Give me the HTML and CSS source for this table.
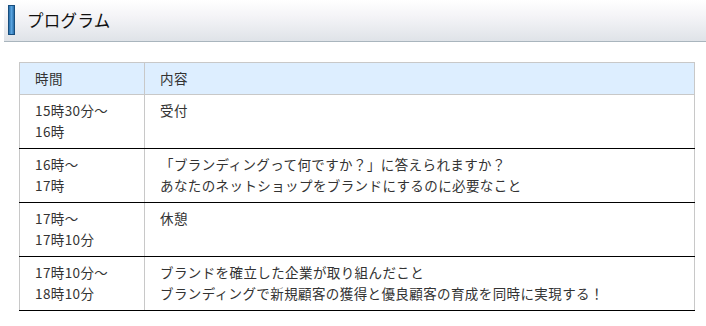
FILE: index.html
```html
<!DOCTYPE html>
<html lang="ja">
<head>
  <meta charset="UTF-8">
  <title>プログラム</title>
  <link rel="stylesheet" href="styles.css">
</head>
<body>

<section class="program">
  <h2 class="section-title">プログラム</h2>
  <table class="schedule">
    <thead>
      <tr>
        <th class="col-time">時間</th>
        <th>内容</th>
      </tr>
    </thead>
    <tbody>
      <tr>
        <td>15時30分～<br>16時</td>
        <td>受付</td>
      </tr>
      <tr>
        <td>16時～<br>17時</td>
        <td>「ブランディングって何ですか？」に答えられますか？<br>あなたのネットショップをブランドにするのに必要なこと</td>
      </tr>
      <tr>
        <td>17時～<br>17時10分</td>
        <td>休憩</td>
      </tr>
      <tr>
        <td>17時10分～<br>18時10分</td>
        <td>ブランドを確立した企業が取り組んだこと<br>ブランディングで新規顧客の獲得と優良顧客の育成を同時に実現する！</td>
      </tr>
    </tbody>
  </table>
</section>

</body>
</html>
```

FILE: styles.css
```css
:root {
  --text: #333;
  --line: #c8c8c8;
  --head-bg: #ddeeff;
}

* {
  box-sizing: border-box;
}

body {
  margin: 0;
  background: #fff;
  color: var(--text);
  font-family: "Noto Sans CJK JP", "Noto Sans", sans-serif;
  font-size: 13.5px;
  letter-spacing: 0.4px;
  overflow: hidden;
}

.program {
  padding-left: 4px;
}

/* title bar with the blue marker on the left */
.section-title {
  display: flex;
  align-items: center;
  gap: 12px;
  height: 42px;
  margin: 0;
  padding: 0 0 1px 4px;
  font-size: 16.5px;
  font-weight: normal;
  letter-spacing: 0.3px;
  color: #111;
  background: linear-gradient(to bottom, #ffffff 0%, #f4f4f7 40%, #dfe3e8 100%);
  border-bottom: 1px solid #a9b5bd;
}

.section-title::before {
  content: "";
  width: 5px;
  height: 28px;
  background: linear-gradient(to right, #2a6ea8, #5aa4e0 50%, #2a6ea8);
  border: 1px solid #174e7e;
}

.schedule {
  width: 676px;
  margin: 20px 0 0 15px;
  border-collapse: collapse;
  line-height: 21px;
}

.schedule th,
.schedule td {
  text-align: left;
  vertical-align: top;
  border-left: 1px solid var(--line);
  border-right: 1px solid var(--line);
}

.schedule th {
  padding: 5px 15px;
  font-weight: normal;
  background: var(--head-bg);
  border-top: 1px solid var(--line);
  border-bottom: 1px solid var(--line);
}

.schedule td {
  padding: 5px 15px 6px;
  border-bottom: 1px solid #000;
}

.col-time {
  width: 125px;
}
```
